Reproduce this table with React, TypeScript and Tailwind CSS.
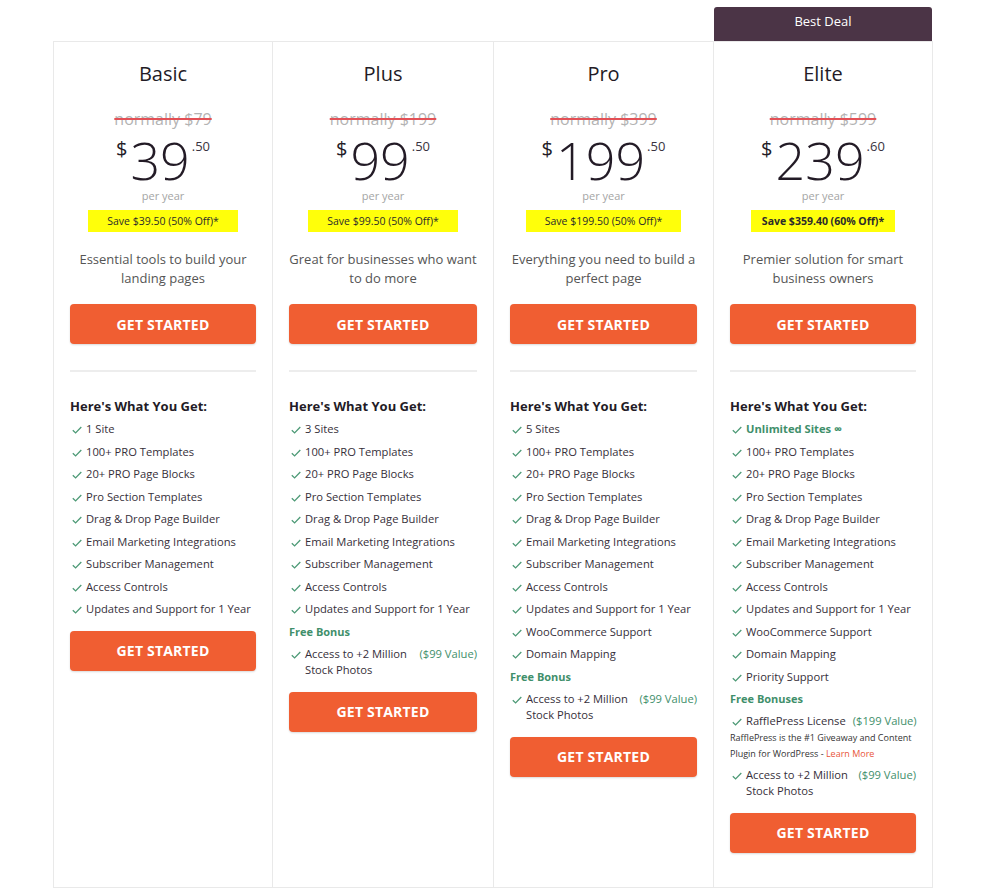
import React from 'react';

type Bonus = { text: string[]; value: string; inline?: boolean; note?: boolean };

type Plan = {
  name: string;
  width: string;
  old: string;
  dollars: string;
  cents: string;
  save: string;
  desc: string[];
  features: string[];
  bonusTitle?: string;
  bonuses: Bonus[];
  best?: boolean;
};

const common = [
  '100+ PRO Templates',
  '20+ PRO Page Blocks',
  'Pro Section Templates',
  'Drag & Drop Page Builder',
  'Email Marketing Integrations',
  'Subscriber Management',
  'Access Controls',
  'Updates and Support for 1 Year',
];

const photos: Bonus = { text: ['Access to +2 Million', 'Stock Photos'], value: '($99 Value)' };

const plans: Plan[] = [
  {
    name: 'Basic',
    width: 'w-[219px]',
    old: 'normally $79',
    dollars: '39',
    cents: '.50',
    save: 'Save $39.50 (50% Off)*',
    desc: ['Essential tools to build your', 'landing pages'],
    features: ['1 Site', ...common],
    bonuses: [],
  },
  {
    name: 'Plus',
    width: 'w-[221px]',
    old: 'normally $199',
    dollars: '99',
    cents: '.50',
    save: 'Save $99.50 (50% Off)*',
    desc: ['Great for businesses who want', 'to do more'],
    features: ['3 Sites', ...common],
    bonusTitle: 'Free Bonus',
    bonuses: [photos],
  },
  {
    name: 'Pro',
    width: 'w-[220px]',
    old: 'normally $399',
    dollars: '199',
    cents: '.50',
    save: 'Save $199.50 (50% Off)*',
    desc: ['Everything you need to build a', 'perfect page'],
    features: ['5 Sites', ...common, 'WooCommerce Support', 'Domain Mapping'],
    bonusTitle: 'Free Bonus',
    bonuses: [photos],
  },
  {
    name: 'Elite',
    width: 'w-[220px]',
    old: 'normally $599',
    dollars: '239',
    cents: '.60',
    save: 'Save $359.40 (60% Off)*',
    desc: ['Premier solution for smart', 'business owners'],
    features: ['Unlimited Sites ∞', ...common, 'WooCommerce Support', 'Domain Mapping', 'Priority Support'],
    bonusTitle: 'Free Bonuses',
    bonuses: [{ text: ['RafflePress License'], value: '($199 Value)', inline: true, note: true }, photos],
    best: true,
  },
];

function Check() {
  return (
    <svg width="10" height="8" viewBox="0 0 10 8" className="mt-[5px] ml-[2px] shrink-0">
      <path d="M0.8 4.2 L3.6 6.9 L9.3 1" fill="none" stroke="#4d9a76" strokeWidth="1.3" />
    </svg>
  );
}

function Button() {
  return (
    <div className="h-[40px] rounded-[4px] bg-[#f05e32] flex items-center justify-center text-white font-bold text-[14px] tracking-[0.2px] shadow-[0_1px_2px_rgba(0,0,0,0.15)]">
      GET STARTED
    </div>
  );
}

function Card({ plan, last }: { plan: Plan; last: boolean }) {
  return (
    <div className={`${plan.width} flex flex-col`}>
      {plan.best ? (
        <div className="h-[34px] mx-px pb-[5px] rounded-t-[3px] bg-[#4b3446] text-white text-[13px] flex items-center justify-center">
          Best Deal
        </div>
      ) : (
        <div className="h-[34px]" />
      )}
      <div
        className={`h-[847px] border-t border-b border-l border-[#e9e9e9] ${
          last ? 'border-r' : ''
        } px-[16px] pt-[18px] flex flex-col`}
      >
        <div className="text-center text-[20px] leading-[28px] font-medium text-[#231b26]">{plan.name}</div>
        <div className="mt-[20px] text-center text-[16px] leading-[22px] text-[#b3b3b3] line-through decoration-[#e35056] decoration-[1.5px]">
          {plan.old}
        </div>
        <div className="mt-[4px] flex justify-center items-start text-[#231b26]">
          <span className="mt-[5px] text-[20px] leading-none">$</span>
          <span className="text-[52px] leading-none font-light ml-[3px]">{plan.dollars}</span>
          <span className="mt-[6px] text-[13px] leading-none ml-[2px] text-[#3a3340]">{plan.cents}</span>
        </div>
        <div className="mt-[2px] text-center text-[11px] leading-[16px] text-[#a5a5a5]">per year</div>
        <div className="mt-[6px] flex justify-center">
          <span
            className={`bg-[#ffff0a] text-[10.5px] leading-[22px] text-[#2b2b2b] whitespace-nowrap ${
              plan.best ? 'font-bold px-[11px]' : 'px-[19px]'
            }`}
          >
            {plan.save}
          </span>
        </div>
        <div className="mt-[18px] text-center text-[13px] leading-[19px] text-[#555] whitespace-nowrap">
          {plan.desc[0]}
          <br />
          {plan.desc[1]}
        </div>
        <div className="mt-[16px]">
          <Button />
        </div>
        <div className="mt-[26px] h-[2px] bg-[#ededed]" />
        <div className="mt-[25px] text-[13px] leading-[18px] font-bold text-[#231b26]">Here's What You Get:</div>
        <div className="mt-[3px] flex flex-col">
          {plan.features.map((f, i) => (
            <div
              key={f}
              className="flex items-start gap-[4px] py-[3px] text-[11.2px] leading-[16.5px] text-[#362f3a] whitespace-nowrap"
            >
              <Check />
              <span className={i === 0 && plan.best ? 'font-bold text-[#3f8f6b]' : ''}>{f}</span>
            </div>
          ))}
          {plan.bonusTitle && (
            <div className="text-[11px] leading-[22px] font-bold text-[#3f8f6b]">{plan.bonusTitle}</div>
          )}
          {plan.bonuses.map((b) => (
            <div key={b.value}>
              <div className="flex items-start gap-[4px] py-[3px] text-[11.2px] leading-[16.5px] text-[#362f3a] whitespace-nowrap">
                <Check />
                {b.inline ? (
                  <span>
                    {b.text[0]}
                    <span className="ml-[7px] text-[#3f8f6b]">{b.value}</span>
                  </span>
                ) : (
                  <>
                    <span>
                      {b.text[0]}
                      <br />
                      {b.text[1]}
                    </span>
                    <span className="ml-auto text-[#3f8f6b]">{b.value}</span>
                  </>
                )}
              </div>
              {b.note && (
                <div className="-mt-[3px] mb-[2px] text-[9px] leading-[16px] text-[#333] whitespace-nowrap">
                  RafflePress is the #1 Giveaway and Content
                  <br />
                  Plugin for WordPress - <span className="text-[#e8553a]">Learn More</span>
                </div>
              )}
            </div>
          ))}
        </div>
        <div className="mt-[10px]">
          <Button />
        </div>
      </div>
    </div>
  );
}

export default function App() {
  return (
    <div className="w-[999px] h-[888px] overflow-hidden bg-white font-['Open_Sans',sans-serif]">
      <div className="pt-[7px] pl-[53px] flex items-start">
        {plans.map((p, i) => (
          <Card key={p.name} plan={p} last={i === plans.length - 1} />
        ))}
      </div>
    </div>
  );
}
